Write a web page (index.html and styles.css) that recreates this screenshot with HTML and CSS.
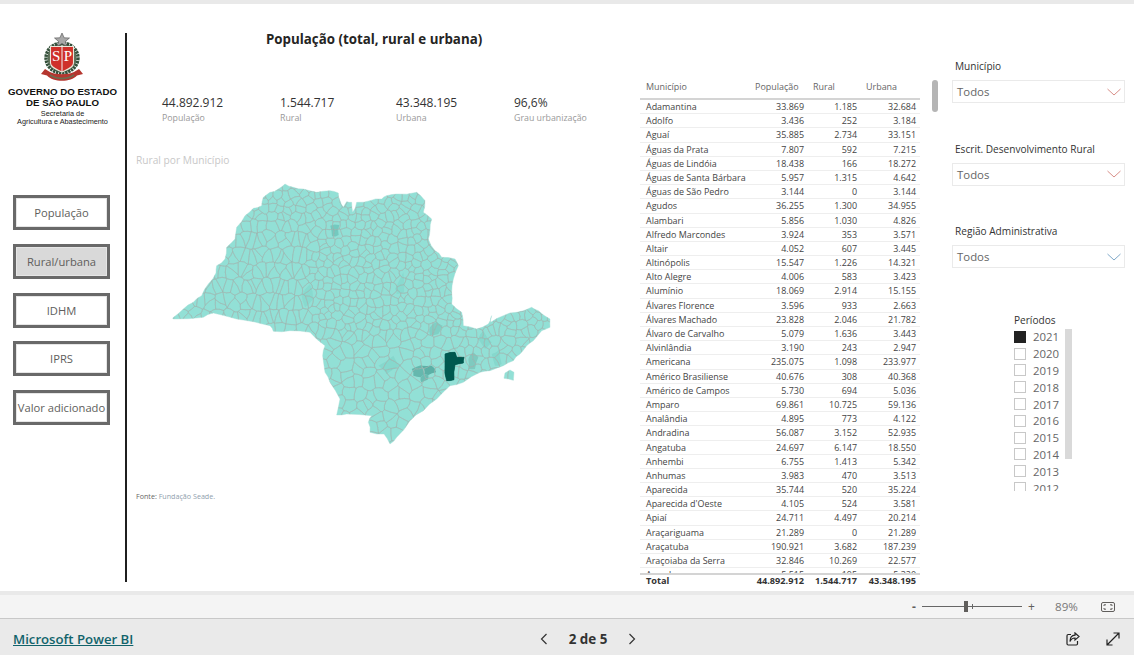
FILE: index.html
```html
<!DOCTYPE html>
<html lang="pt-BR">
<head>
<meta charset="utf-8">
<title>População (total, rural e urbana)</title>
<link rel="stylesheet" href="styles.css">
</head>
<body>
<div class="top-strip"></div>
<main class="canvas">
  <aside class="sidebar">
    <div class="logo">
      <svg class="crest" viewBox="0 0 42 50" aria-hidden="true">
        <ellipse cx="21" cy="25" rx="14.5" ry="14.5" fill="#5d6f58"/>
        <ellipse cx="21" cy="25" rx="16" ry="15" fill="none" stroke="#34503a" stroke-width="3.4" stroke-dasharray="2.4 0.7"/>
        <path d="M4 36 L0 41 L6 42.5 C12 49.5 30 49.5 36 42.5 L42 41 L38 36 L33 39 C27 42 15 42 9 39 Z" fill="#b5362f"/>
        <path d="M9 42 C16 46.5 26 46.5 33 42" fill="none" stroke="#6f6a4e" stroke-width="2"/>
        <polygon points="21,0 23.2,4.8 28.5,5 24.4,8.4 25.9,13.4 21,10.6 16.1,13.4 17.6,8.4 13.5,5 18.8,4.8" fill="#a8a8a8" stroke="#4f4f4f" stroke-width="0.6"/>
        <path d="M9.5 13.5 H32.5 V30 C32.5 34.5 26 36.5 21 39 C16 36.5 9.5 34.5 9.5 30 Z" fill="#cf302a" stroke="#ece7da" stroke-width="1.1"/>
        <line x1="21" y1="12" x2="21" y2="38.5" stroke="#f2f2f2" stroke-width="1"/>
        <text x="15.2" y="27.5" class="crest-letter">S</text>
        <text x="26.8" y="27.5" class="crest-letter">P</text>
      </svg>
      <div class="gov">GOVERNO DO ESTADO<br>DE SÃO PAULO</div>
      <div class="sec">Secretaria de<br>Agricultura e Abastecimento</div>
    </div>
    <nav class="nav">
      <button class="nav-btn">População</button>
      <button class="nav-btn is-active">Rural/urbana</button>
      <button class="nav-btn">IDHM</button>
      <button class="nav-btn">IPRS</button>
      <button class="nav-btn">Valor adicionado</button>
    </nav>
  </aside>

  <section class="content">
    <h1 class="title">População (total, rural e urbana)</h1>
    <div class="kpis">
      <div class="kpi"><div class="kpi-value">44.892.912</div><div class="kpi-label">População</div></div>
      <div class="kpi"><div class="kpi-value">1.544.717</div><div class="kpi-label">Rural</div></div>
      <div class="kpi"><div class="kpi-value">43.348.195</div><div class="kpi-label">Urbana</div></div>
      <div class="kpi"><div class="kpi-value">96,6%</div><div class="kpi-label">Grau urbanização</div></div>
    </div>
    <h2 class="map-title">Rural por Município</h2>
    <svg id="map" class="map" viewBox="0 0 1290 900" role="img" aria-label="Mapa do estado de São Paulo"></svg>
    <p class="source"><span class="source-key">Fonte:</span> <span class="source-val">Fundação Seade.</span></p>
  </section>

  <section class="table">
    <div class="row head"><span>Município</span><span>População</span><span>Rural</span><span>Urbana</span></div>
    <div class="rows">
      <div class="row"><span>Adamantina</span><span>33.869</span><span>1.185</span><span>32.684</span></div>
      <div class="row"><span>Adolfo</span><span>3.436</span><span>252</span><span>3.184</span></div>
      <div class="row"><span>Aguaí</span><span>35.885</span><span>2.734</span><span>33.151</span></div>
      <div class="row"><span>Águas da Prata</span><span>7.807</span><span>592</span><span>7.215</span></div>
      <div class="row"><span>Águas de Lindóia</span><span>18.438</span><span>166</span><span>18.272</span></div>
      <div class="row"><span>Águas de Santa Bárbara</span><span>5.957</span><span>1.315</span><span>4.642</span></div>
      <div class="row"><span>Águas de São Pedro</span><span>3.144</span><span>0</span><span>3.144</span></div>
      <div class="row"><span>Agudos</span><span>36.255</span><span>1.300</span><span>34.955</span></div>
      <div class="row"><span>Alambari</span><span>5.856</span><span>1.030</span><span>4.826</span></div>
      <div class="row"><span>Alfredo Marcondes</span><span>3.924</span><span>353</span><span>3.571</span></div>
      <div class="row"><span>Altair</span><span>4.052</span><span>607</span><span>3.445</span></div>
      <div class="row"><span>Altinópolis</span><span>15.547</span><span>1.226</span><span>14.321</span></div>
      <div class="row"><span>Alto Alegre</span><span>4.006</span><span>583</span><span>3.423</span></div>
      <div class="row"><span>Alumínio</span><span>18.069</span><span>2.914</span><span>15.155</span></div>
      <div class="row"><span>Álvares Florence</span><span>3.596</span><span>933</span><span>2.663</span></div>
      <div class="row"><span>Álvares Machado</span><span>23.828</span><span>2.046</span><span>21.782</span></div>
      <div class="row"><span>Álvaro de Carvalho</span><span>5.079</span><span>1.636</span><span>3.443</span></div>
      <div class="row"><span>Alvinlândia</span><span>3.190</span><span>243</span><span>2.947</span></div>
      <div class="row"><span>Americana</span><span>235.075</span><span>1.098</span><span>233.977</span></div>
      <div class="row"><span>Américo Brasiliense</span><span>40.676</span><span>308</span><span>40.368</span></div>
      <div class="row"><span>Américo de Campos</span><span>5.730</span><span>694</span><span>5.036</span></div>
      <div class="row"><span>Amparo</span><span>69.861</span><span>10.725</span><span>59.136</span></div>
      <div class="row"><span>Analândia</span><span>4.895</span><span>773</span><span>4.122</span></div>
      <div class="row"><span>Andradina</span><span>56.087</span><span>3.152</span><span>52.935</span></div>
      <div class="row"><span>Angatuba</span><span>24.697</span><span>6.147</span><span>18.550</span></div>
      <div class="row"><span>Anhembi</span><span>6.755</span><span>1.413</span><span>5.342</span></div>
      <div class="row"><span>Anhumas</span><span>3.983</span><span>470</span><span>3.513</span></div>
      <div class="row"><span>Aparecida</span><span>35.744</span><span>520</span><span>35.224</span></div>
      <div class="row"><span>Aparecida d'Oeste</span><span>4.105</span><span>524</span><span>3.581</span></div>
      <div class="row"><span>Apiaí</span><span>24.711</span><span>4.497</span><span>20.214</span></div>
      <div class="row"><span>Araçariguama</span><span>21.289</span><span>0</span><span>21.289</span></div>
      <div class="row"><span>Araçatuba</span><span>190.921</span><span>3.682</span><span>187.239</span></div>
      <div class="row"><span>Araçoiaba da Serra</span><span>32.846</span><span>10.269</span><span>22.577</span></div>
      <div class="row"><span>Arandu</span><span>5.515</span><span>195</span><span>5.320</span></div>
    </div>
    <div class="row total"><span>Total</span><span>44.892.912</span><span>1.544.717</span><span>43.348.195</span></div>
  </section>

  <div class="vscroll"><div class="vthumb"></div></div>

  <aside class="filters">
    <div class="slicer">
      <div class="slicer-label">Município</div>
      <div class="dropdown"><span>Todos</span><svg class="chev warm" viewBox="0 0 14 8"><path d="M0.5 1 L7 7 L13.5 1"/></svg></div>
    </div>
    <div class="slicer">
      <div class="slicer-label">Escrit. Desenvolvimento Rural</div>
      <div class="dropdown"><span>Todos</span><svg class="chev warm" viewBox="0 0 14 8"><path d="M0.5 1 L7 7 L13.5 1"/></svg></div>
    </div>
    <div class="slicer">
      <div class="slicer-label">Região Administrativa</div>
      <div class="dropdown"><span>Todos</span><svg class="chev cool" viewBox="0 0 14 8"><path d="M0.5 1 L7 7 L13.5 1"/></svg></div>
    </div>
    <div class="periods">
      <div class="periods-label">Períodos</div>
      <div class="periods-body">
        <ul class="years">
          <li class="is-on"><i></i>2021</li>
          <li><i></i>2020</li>
          <li><i></i>2019</li>
          <li><i></i>2018</li>
          <li><i></i>2017</li>
          <li><i></i>2016</li>
          <li><i></i>2015</li>
          <li><i></i>2014</li>
          <li><i></i>2013</li>
          <li><i></i>2012</li>
        </ul>
        <div class="years-scroll"></div>
      </div>
    </div>
  </aside>
</main>
<div class="gap-strip"></div>
<div class="zoombar">
  <span class="zoom-sign minus">-</span>
  <div class="slider"><span class="tick"></span><span class="knob"></span></div>
  <span class="zoom-sign plus">+</span>
  <span class="zoom-pct">89%</span>
  <svg class="fit" viewBox="0 0 14 10"><rect x="0.5" y="0.5" width="13" height="9" rx="1.5"/><path d="M3 4 V2.8 H5 M9 2.8 H11 V4 M3 6 V7.2 H5 M9 7.2 H11 V6"/></svg>
</div>
<footer class="footer">
  <a class="brand" href="#">Microsoft Power BI</a>
  <div class="pager">
    <svg class="pg-arrow" viewBox="0 0 8 12"><path d="M6.5 1 L1.5 6 L6.5 11"/></svg>
    <span class="pg-text">2 de 5</span>
    <svg class="pg-arrow" viewBox="0 0 8 12"><path d="M1.5 1 L6.5 6 L1.5 11"/></svg>
  </div>
  <div class="actions">
    <svg class="act" viewBox="0 0 14 14"><path d="M5 2.5 H2.2 Q1 2.5 1 3.7 V11.8 Q1 13 2.2 13 H10.3 Q11.5 13 11.5 11.8 V9"/><path d="M9 1 L13 4.6 L9 8 V6 C6.5 6 5 7.2 4 9.4 C4 6 6 3.4 9 3.2 Z"/></svg>
    <svg class="act" viewBox="0 0 14 14"><path d="M1 13 L13 1 M7.5 1 H13 V6.5 M1 7.5 V13 H6.5"/></svg>
  </div>
</footer>
<script src="map.js"></script>
</body>
</html>
```
FILE: styles.css
```css
* { box-sizing: border-box; }
html, body { margin: 0; padding: 0; }
body {
  width: 1134px;
  height: 655px;
  overflow: hidden;
  background: #fff;
  font-family: "Open Sans", "Noto Sans", sans-serif;
  color: #333;
}
.top-strip { height: 4px; background: #e9e9e9; }
.canvas {
  height: 587px;
  padding-top: 29px;
  display: grid;
  grid-template-columns: 127px 513px 285px 25px 184px;
  align-items: start;
  background: #fff;
}

/* Sidebar */
.sidebar { height: 549px; border-right: 2px solid #1f1f1f; }
.logo { text-align: center; width: 125px; }
.crest { display: block; width: 42px; height: 50px; margin: 0 0 3px 41px; }
.crest-letter { font-family: "Liberation Serif", serif; font-size: 15px; fill: #fff; text-anchor: middle; }
.gov { font-family: "Liberation Sans", sans-serif; font-weight: 700; font-size: 9.7px; line-height: 11px; color: #111; }
.sec { font-family: "Liberation Sans", sans-serif; font-size: 7.3px; line-height: 8px; color: #222; margin-top: 2px; }
.nav { display: flex; flex-direction: column; gap: 13.8px; margin: 69px 0 0 13px; }
.nav-btn {
  display: block;
  width: 97px;
  height: 35px;
  padding: 0;
  border: 3px solid #696969;
  background: #fff;
  color: #605e5c;
  font: 400 11.2px "Open Sans", sans-serif;
  box-shadow: inset 0 0 0 1px #e6e6e6;
  white-space: nowrap;
}
.nav-btn.is-active { background: #d9d9d9; }

/* Centre */
.content { height: 549px; display: flex; flex-direction: column; }
.title { margin: -3px 0 0 139px; font-size: 13.3px; line-height: 18px; font-weight: 700; color: #252423; }
.kpis { display: grid; grid-template-columns: 118px 116px 118px 110px; margin: 47px 0 0 35px; }
.kpi-value { font-size: 12px; line-height: 16px; color: #333; }
.kpi-label { font-size: 8.8px; line-height: 12px; color: #999; margin-top: 1px; }
.map-title { margin: 29px 0 0 9px; font-size: 10.2px; line-height: 14px; font-weight: 400; color: #c8c8c8; }
.map { display: block; width: 430px; height: 300px; margin: 2px 0 0 3px; }
.source { margin: 22px 0 0 9px; font-size: 7.15px; line-height: 10px; }
.source-key { color: #666; }
.source-val { color: #8fa0ad; }

/* Table */
.table { display: flex; flex-direction: column; padding-top: 47px; }
.row {
  flex: none;
  display: grid;
  grid-template-columns: 104px 54px 53px 59px;
  padding: 0 4px 0 6px;
  width: 280px;
  font-size: 8.95px;
  line-height: 13.2px;
  height: 14.2px;
  color: #444;
  border-bottom: 1px solid #eeeeee;
  white-space: nowrap;
}
.row > span:not(:first-child) { text-align: right; }
.rows { flex: none; height: 473px; overflow: hidden; }
.head { height: 20px; color: #666; border-bottom: 2px solid #d4d4d4; line-height: 14px; }
.head > span:not(:first-child) { text-align: left; }
.head > span:nth-child(2) { padding-left: 5px; }
.head > span:nth-child(3) { padding-left: 9px; }
.head > span:nth-child(4) { padding-left: 9px; }
.total { height: 16px; font-size: 9.2px; font-weight: 700; color: #333; border-top: 2px solid #d4d4d4; border-bottom: 0; line-height: 12px; }

.vscroll { padding: 47px 0 0 7px; }
.vthumb { width: 6px; height: 32px; border-radius: 3px; background: #b5b5b5; }

/* Filters */
.filters { padding-left: 2px; }
.slicer { height: 82.5px; }
.slicer:first-child { margin-top: 25px; }
.slicer-label { font-size: 10.1px; line-height: 16px; color: #333; padding-left: 3px; }
.dropdown {
  width: 173px;
  height: 23px;
  margin-top: 6px;
  border: 1px solid #eaeaea;
  padding: 0 3px 0 4px;
  display: flex;
  align-items: center;
  justify-content: space-between;
  font-size: 11.4px;
  color: #666;
}
.chev { width: 14px; height: 8px; fill: none; stroke-width: 1; }
.chev.warm { stroke: #d88f88; }
.chev.cool { stroke: #7fa8c8; }
.periods { margin: 7px 0 0 62px; }
.periods-label { font-size: 10.1px; line-height: 14px; color: #333; }
.periods-body { display: flex; height: 163px; overflow: hidden; margin-top: 1px; }
.years { list-style: none; margin: 1px 0 0; padding: 0; width: 51px; }
.years li { display: flex; align-items: center; height: 16.8px; font-size: 11.4px; color: #666; }
.years i { display: block; width: 12px; height: 12px; margin-right: 7px; border: 1px solid #c8c8c8; flex: none; }
.years .is-on i { background: #222; border-color: #222; }
.years-scroll { width: 7px; height: 130px; background: #d9d9d9; margin-top: 1px; }

/* Bottom */
.gap-strip { height: 4px; background: #e9e9e9; }
.zoombar {
  height: 24px;
  background: #f4f4f4;
  border-bottom: 1px solid #c8c8c8;
  display: flex;
  align-items: center;
  padding: 0 19px 0 912px;
  color: #605e5c;
}
.zoom-sign { font-size: 12px; line-height: 1; width: 7px; }
.minus { font-weight: 700; }
.slider { position: relative; width: 100px; height: 1px; background: #666; margin: 0 6px 0 3px; }
.knob { position: absolute; left: 42px; top: -5px; width: 4px; height: 11px; background: #605e5c; }
.tick { position: absolute; left: 50px; top: -2px; width: 1px; height: 5px; background: #666; }
.plus { width: 9px; }
.zoom-pct { font-size: 11.6px; margin-left: 18px; width: 46px; color: #777; }
.fit { width: 14px; height: 10px; fill: none; stroke: #605e5c; stroke-width: 1; }
.footer {
  height: 36px;
  background: #eaeaea;
  display: grid;
  grid-template-columns: 534px 100px 1fr;
  align-items: center;
  padding: 3px 0 0 13px;
}
.brand { font-size: 13.2px; font-weight: 600; color: #11636b; text-decoration: underline; white-space: nowrap; }
.pager { display: flex; align-items: center; justify-content: space-between; width: 96px; margin-left: -7px; }
.pg-arrow { width: 8px; height: 12px; fill: none; stroke: #333; stroke-width: 1.2; }
.pg-text { font-size: 13.4px; font-weight: 700; color: #333; }
.actions { display: flex; justify-content: flex-end; gap: 26px; padding-right: 14px; }
.act { width: 14px; height: 14px; fill: none; stroke: #222; stroke-width: 1.2; }
```
FILE: map.js
```js
(function () {
  var NS = "http://www.w3.org/2000/svg";
  var svg = document.getElementById("map");

  var outline = [[128,447],[160,420],[190,400],[215,380],[235,345],[258,312],[260,290],[285,270],[290,235],[315,210],[320,175],[345,140],[370,118],[395,110],[400,85],[420,70],[445,60],[465,45],[490,55],[520,60],[560,70],[600,65],[625,72],[630,95],[640,115],[650,98],[665,100],[668,130],[680,100],[720,95],[755,90],[770,80],[800,75],[860,70],[885,95],[880,130],[905,150],[900,185],[895,210],[915,245],[935,265],[975,270],[985,290],[970,330],[965,370],[965,405],[995,430],[1000,470],[1040,480],[1075,465],[1085,440],[1082,460],[1120,440],[1160,430],[1205,415],[1225,425],[1260,450],[1260,475],[1235,485],[1210,515],[1190,530],[1170,555],[1150,575],[1120,590],[1080,605],[1050,610],[1000,640],[960,650],[920,690],[880,725],[840,755],[800,805],[780,825],[762,795],[720,790],[715,760],[725,740],[650,735],[620,738],[630,690],[600,640],[585,610],[578,560],[585,530],[540,490],[480,485],[430,487],[420,470],[370,458],[320,450],[250,432],[220,445],[130,450]];
  var island = [[1125,612],[1140,603],[1152,610],[1150,634],[1136,630],[1122,628]];

  var highlights = [
    ["#74c9bf", [[601,170],[628,168],[626,198],[606,202]]],
    ["#86d8cd", [[745,590],[790,560],[810,590],[770,615]]],
    ["#86d8cd", [[1045,510],[1060,485],[1085,520],[1065,540]]],
    ["#86d8cd", [[1085,555],[1110,540],[1115,585],[1095,590]]],
    ["#88dacf", [[515,380],[540,345],[550,390],[525,415]]],
    ["#88dacf", [[795,360],[820,310],[822,370],[800,375]]],
    ["#7fd0c5", [[900,475],[920,458],[938,470],[925,495],[900,498]]],
    ["#7fcabf", [[1015,570],[1030,550],[1045,565],[1035,600],[1015,600]]],
    ["#66b8ae", [[845,600],[875,588],[885,615],[872,625],[850,620]]],
    ["#5cb0a6", [[875,590],[905,590],[918,610],[895,618],[885,615]]],
    ["#6cbdb3", [[872,625],[885,615],[895,618],[893,632],[874,640]]],
    ["#00584f", [[945,555],[975,550],[980,565],[1002,565],[1000,582],[975,587],[972,632],[950,635],[945,590]]]
  ];

  var seed = 20210;
  function rnd() {
    seed |= 0; seed = seed + 0x6D2B79F5 | 0;
    var t = Math.imul(seed ^ seed >>> 15, 1 | seed);
    t = t + Math.imul(t ^ t >>> 7, 61 | t) ^ t;
    return ((t ^ t >>> 14) >>> 0) / 4294967296;
  }

  // Seeds: tall narrow cells in the north-west, larger ones along the south.
  var seeds = [], rowIndex = 0;
  for (var y = 30; y < 840; rowIndex++) {
    var stepY = y < 490 ? 23 : 31;
    for (var x = 110; x < 1290; ) {
      var nw = x < 540 && y > 170 && y < 490;
      var stepX = nw ? 17 : (y > 520 && x < 900 ? 34 : 24);
      if (!(nw && rowIndex % 2)) {
        seeds.push([x + (rnd() - 0.5) * stepX * 0.85, y + (rnd() - 0.5) * stepY * 0.85]);
      }
      x += stepX;
    }
    y += stepY;
  }

  function clipHalf(poly, a, b) {
    var mx = (a[0] + b[0]) / 2, my = (a[1] + b[1]) / 2;
    var nx = b[0] - a[0], ny = b[1] - a[1], out = [];
    for (var i = 0; i < poly.length; i++) {
      var p = poly[i], q = poly[(i + 1) % poly.length];
      var dp = (p[0] - mx) * nx + (p[1] - my) * ny;
      var dq = (q[0] - mx) * nx + (q[1] - my) * ny;
      if (dp <= 0) out.push(p);
      if (dp * dq < 0) {
        var t = dp / (dp - dq);
        out.push([p[0] + (q[0] - p[0]) * t, p[1] + (q[1] - p[1]) * t]);
      }
    }
    return out;
  }

  function wobble(a, b) {
    var l = Math.hypot(b[0] - a[0], b[1] - a[1]);
    if (l < 9) return [];
    var mx = (a[0] + b[0]) / 2, my = (a[1] + b[1]) / 2;
    var h = Math.sin(Math.round(mx) * 12.9898 + Math.round(my) * 78.233) * 43758.5453;
    h = (h - Math.floor(h) - 0.5) * Math.min(l * 0.28, 6);
    var s = (a[0] < b[0] || (a[0] === b[0] && a[1] < b[1])) ? 1 : -1;
    return [[mx - s * (b[1] - a[1]) / l * h, my + s * (b[0] - a[0]) / l * h]];
  }

  function toPath(poly, wob) {
    var d = "";
    poly.forEach(function (p, i) {
      var q = poly[(i + 1) % poly.length];
      d += (i ? "L" : "M") + p[0].toFixed(1) + " " + p[1].toFixed(1);
      if (wob) wobble(p, q).forEach(function (w) { d += "L" + w[0].toFixed(1) + " " + w[1].toFixed(1); });
    });
    return d + "Z";
  }

  function el(name, attrs, parent) {
    var n = document.createElementNS(NS, name);
    for (var k in attrs) n.setAttribute(k, attrs[k]);
    parent.appendChild(n);
    return n;
  }

  var defs = el("defs", {}, svg);
  var clip = el("clipPath", { id: "state" }, defs);
  el("path", { d: toPath(outline, true) + toPath(island) }, clip);

  el("path", { d: toPath(outline, true) + toPath(island), fill: "#92e0d6" }, svg);

  var g = el("g", { "clip-path": "url(#state)" }, svg);
  var cells = "";
  seeds.forEach(function (s, i) {
    var cell = [[s[0]-90,s[1]-90],[s[0]+90,s[1]-90],[s[0]+90,s[1]+90],[s[0]-90,s[1]+90]];
    seeds.forEach(function (o, j) {
      if (i === j) return;
      var dx = o[0] - s[0], dy = o[1] - s[1];
      if (dx * dx + dy * dy < 18000) cell = clipHalf(cell, s, o);
    });
    if (cell.length > 2) cells += toPath(cell, true);
  });
  highlights.forEach(function (h) {
    el("path", { d: toPath(h[1], true), fill: h[0] }, g);
  });
  el("path", { d: cells, fill: "none", stroke: "#a4b2af", "stroke-width": 1.35, "stroke-linejoin": "round" }, g);
  el("path", { d: toPath(highlights[highlights.length - 1][1], true), fill: "#00584f", stroke: "#00584f", "stroke-width": 2 }, g);
  el("path", { d: toPath(outline, true) + toPath(island), fill: "none", stroke: "#a3dcd3", "stroke-width": 1.2 }, svg);
})();
```
